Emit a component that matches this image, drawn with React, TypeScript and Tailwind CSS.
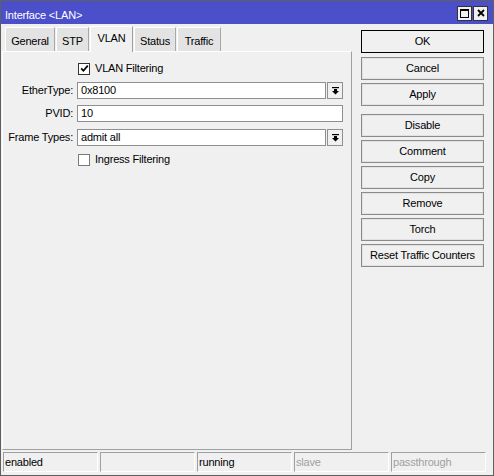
import React from "react";

const font = "font-['Liberation_Sans',Arial,sans-serif]";

function DropArrow() {
  return (
    <div className="w-[16px] h-[17px] flex items-center justify-center bg-[#f0f0f0] border border-[#8f8f8f]">
      <svg width="7" height="8" viewBox="0 0 7 8">
        <rect x="0" y="0" width="7" height="1.2" fill="#000" />
        <path d="M2 2h3v2h2L3.5 7.6 0 4h2z" fill="#000" />
      </svg>
    </div>
  );
}

function CheckBox({ checked }: { checked: boolean }) {
  return (
    <div
      className={
        checked
          ? "w-[12px] h-[12px] bg-white border border-[#333] flex items-center justify-center"
          : "w-[12px] h-[12px] bg-white border border-[#7a7a7a]"
      }
    >
      {checked && (
        <svg width="9" height="9" viewBox="0 0 9 9">
          <path d="M1.2 4.4 L3.4 6.8 L7.8 1.6" stroke="#000" strokeWidth="1.7" fill="none" />
        </svg>
      )}
    </div>
  );
}

function Button({ label, isDefault }: { label: string; isDefault?: boolean }) {
  return (
    <div
      className={
        isDefault
          ? "h-[23px] flex items-center justify-center bg-[#f0f0f0] border border-black"
          : "h-[23px] flex items-center justify-center bg-[#f0f0f0] border border-[#8a8a8a] shadow-[inset_0_0_0_1px_#e2e2e2]"
      }
    >
      {label}
    </div>
  );
}

const tabs = [
  { name: "General", w: "w-[50px]" },
  { name: "STP", w: "w-[33px]" },
  { name: "VLAN", w: "w-[43px]", active: true },
  { name: "Status", w: "w-[42px]" },
  { name: "Traffic", w: "w-[44px]" },
];

const statusCells = [
  { text: "enabled", dim: false },
  { text: "", dim: false },
  { text: "running", dim: false },
  { text: "slave", dim: true },
  { text: "passthrough", dim: true },
];

export default function App() {
  return (
    <div
      className={`${font} w-[494px] h-[476px] bg-[#f0f0f0] border border-[#5f5f5f] flex flex-col text-[11px] tracking-[-0.2px] text-black overflow-hidden`}
    >
      {/* Title bar */}
      <div className="h-[23px] bg-[#4b4fca] flex items-center justify-between pl-[4px] pr-[5px]">
        <span className="text-white pt-[5px]">Interface &lt;LAN&gt;</span>
        <div className="flex gap-[1px] pt-[1px]">
          <div className="w-[15px] h-[15px] bg-[#f0f0f0] border border-[#333] flex items-center justify-center">
            <div className="w-[9px] h-[9px] border border-black border-t-2" />
          </div>
          <div className="w-[15px] h-[15px] bg-[#f0f0f0] border border-[#333] flex items-center justify-center">
            <svg width="8" height="8" viewBox="0 0 8 8">
              <path d="M1 1 L7 7 M7 1 L1 7" stroke="#000" strokeWidth="1.8" />
            </svg>
          </div>
        </div>
      </div>

      <div className="flex flex-1 min-h-0">
        {/* Left: tabs + panel */}
        <div className="w-[351px] pl-[1px] flex flex-col">
          <div className="h-[27px] flex items-end gap-[1px] pl-[3px]">
            {tabs.map((t) =>
              t.active ? (
                <div
                  key={t.name}
                  className={`${t.w} h-[26px] mb-[-1px] relative z-10 bg-[#f0f0f0] border-t border-l border-white border-r border-r-[#a0a0a0] flex items-center justify-center pb-[2px]`}
                >
                  {t.name}
                </div>
              ) : (
                <div
                  key={t.name}
                  className={`${t.w} h-[24px] bg-[#e3e3e3] border-t border-l border-white border-r border-r-[#a8a8a8] flex items-center justify-center pt-[3px]`}
                >
                  {t.name}
                </div>
              )
            )}
          </div>
          <div className="flex-1 border-t border-l border-white border-r border-b border-r-[#a0a0a0] border-b-[#a0a0a0] pt-[8px] flex flex-col gap-[6px]">
            <div className="h-[17px] flex items-center pl-[75px] gap-[5px]">
              <CheckBox checked />
              <span>VLAN Filtering</span>
            </div>
            <div className="h-[17px] flex items-center -mt-[1px]">
              <span className="w-[71px] text-right pr-[1px]">EtherType:</span>
              <div className="ml-[3px] w-[249px] h-[17px] bg-white border border-[#8f8f8f] flex items-center pl-[3px]">
                0x8100
              </div>
              <div className="ml-[1px]">
                <DropArrow />
              </div>
            </div>
            <div className="h-[17px] flex items-center">
              <span className="w-[71px] text-right pr-[1px]">PVID:</span>
              <div className="ml-[3px] w-[266px] h-[17px] bg-white border border-[#8f8f8f] flex items-center pl-[3px]">
                10
              </div>
            </div>
            <div className="h-[17px] flex items-center mt-[1px]">
              <span className="w-[71px] text-right pr-[1px] whitespace-nowrap">Frame Types:</span>
              <div className="ml-[3px] w-[249px] h-[17px] bg-white border border-[#8f8f8f] flex items-center pl-[3px]">
                admit all
              </div>
              <div className="ml-[1px]">
                <DropArrow />
              </div>
            </div>
            <div className="h-[17px] flex items-center pl-[75px] gap-[5px] -mt-[1px]">
              <CheckBox checked={false} />
              <span>Ingress Filtering</span>
            </div>
          </div>
        </div>

        {/* Right: buttons */}
        <div className="w-[123px] ml-[9px] pt-[6px] flex flex-col gap-[3px]">
          <Button label="OK" isDefault />
          <div className="-mt-[2px]" />
          <Button label="Cancel" />
          <Button label="Apply" />
          <div className="h-[2px]" />
          <Button label="Disable" />
          <Button label="Comment" />
          <Button label="Copy" />
          <Button label="Remove" />
          <Button label="Torch" />
          <Button label="Reset Traffic Counters" />
        </div>
      </div>

      {/* Status bar */}
      <div className="h-[25px] pt-[2px] flex gap-[2px] px-[2px]">
        {statusCells.map((c, i) => (
          <div
            key={i}
            className={
              c.dim
                ? "w-[95px] h-[20px] border-t border-l border-[#a0a0a0] border-b border-r border-b-white border-r-white flex items-center pl-[1px] text-[#a0a0a0]"
                : "w-[95px] h-[20px] border-t border-l border-[#a0a0a0] border-b border-r border-b-white border-r-white flex items-center pl-[1px]"
            }
          >
            {c.text}
          </div>
        ))}
      </div>
    </div>
  );
}
